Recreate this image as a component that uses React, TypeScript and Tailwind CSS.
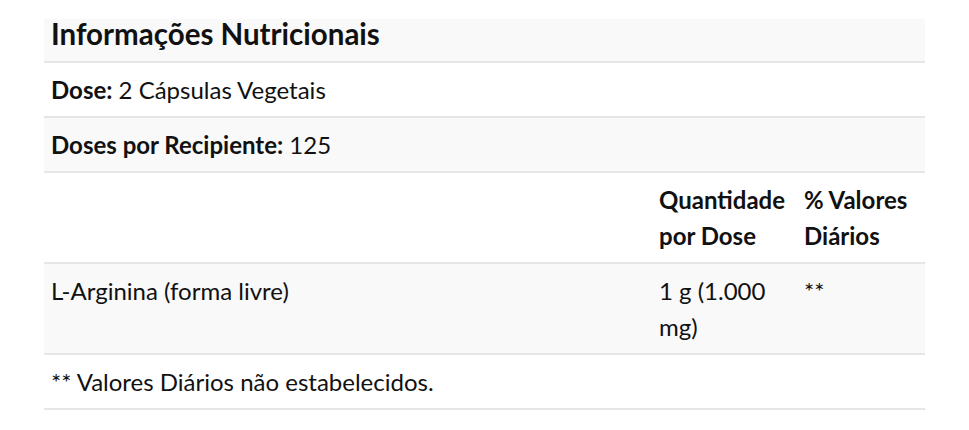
import React from 'react';

const rowBase = 'border-b-2 border-[#e6e6e6]';
const cell = 'px-[7px] pt-[9px] pb-[8px]';

export default function App() {
  return (
    <div className="min-h-[430px] bg-white pt-[19px] pl-[44px] font-['Lato','Liberation_Sans',sans-serif] text-[#111]">
      <div className="w-[881px]">
        <div className={`${rowBase} h-[44px] bg-[#f9f9f9] px-[7px]`}>
          <h2 className="text-[29.5px] leading-[28px] font-bold pt-[1px]">Informações Nutricionais</h2>
        </div>
        <div className={`${rowBase} ${cell} bg-white text-[24px] leading-[36px]`}>
          <b className="font-bold">Dose:</b> 2 Cápsulas Vegetais
        </div>
        <div className={`${rowBase} ${cell} bg-[#f9f9f9] text-[24px] leading-[36px]`}>
          <b className="font-bold">Doses por Recipiente:</b> 125
        </div>
        <div className={`${rowBase} grid grid-cols-[608px_145px_1fr] bg-white text-[24px] leading-[36px]`}>
          <div className={cell} />
          <div className={`${cell} font-bold`}>Quantidade por Dose</div>
          <div className={`${cell} font-bold`}>% Valores Diários</div>
        </div>
        <div className={`${rowBase} grid grid-cols-[608px_145px_1fr] bg-[#f9f9f9] text-[24px] leading-[36px]`}>
          <div className={cell}>L-Arginina (forma livre)</div>
          <div className={cell}>1 g (1.000 mg)</div>
          <div className={cell}>**</div>
        </div>
        <div className={`${rowBase} ${cell} bg-white text-[24px] leading-[36px]`}>
          ** Valores Diários não estabelecidos.
        </div>
      </div>
    </div>
  );
}
